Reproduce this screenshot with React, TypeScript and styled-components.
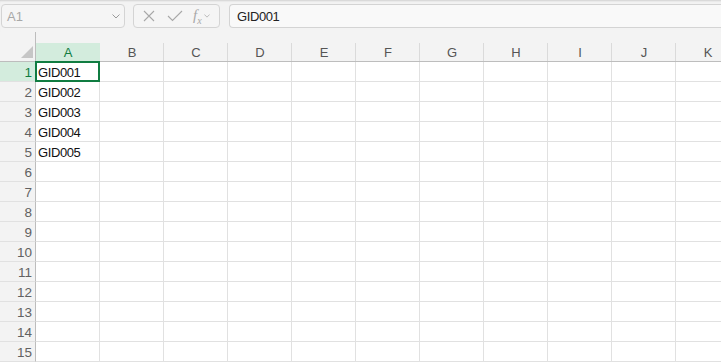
import styled, { createGlobalStyle } from "styled-components";

const GlobalStyle = createGlobalStyle`
  html, body { margin: 0; padding: 0; background: #fff; }
  body { font-family: "Liberation Sans", Arial, sans-serif; overflow: hidden; }
`;

const COLS = ["A", "B", "C", "D", "E", "F", "G", "H", "I", "J", "K"];
const ROWS = Array.from({ length: 15 }, (_, i) => i + 1);
const DATA: Record<number, string> = { 1: "GID001", 2: "GID002", 3: "GID003", 4: "GID004", 5: "GID005" };

const Page = styled.div`
  width: 721px;
  height: 362px;
  overflow: hidden;
  background: #fff;
`;

const Toolbar = styled.div`
  display: flex;
  align-items: center;
  height: 32px;
  padding: 4px 0 4px 1px;
  box-sizing: border-box;
  background: #f3f3f3;
  box-shadow: inset 0 2px 2px -1px rgba(0, 0, 0, 0.14);
`;

const Box = styled.div<{ $w?: number; $grow?: boolean; $bg?: string }>`
  box-sizing: border-box;
  height: 24px;
  width: ${(p) => (p.$w ? `${p.$w}px` : "auto")};
  flex: ${(p) => (p.$grow ? "1" : "none")};
  border: 1px solid #d4d4d4;
  border-radius: 4px;
  background: ${(p) => p.$bg || "#f5f5f5"};
  display: flex;
  align-items: center;
  font-size: 13px;
`;

const NameBox = styled(Box)`
  justify-content: space-between;
  padding: 0 4px 0 5px;
  margin-right: 8px;
  color: #a8a8a8;
`;

const FnBox = styled(Box)`
  padding: 0 4px 0 9px;
  gap: 12px;
  margin-right: 9px;
`;

const FormulaBox = styled(Box)`
  padding-left: 7px;
  border-right: none;
  border-radius: 4px 0 0 4px;
  color: #222;
  letter-spacing: -0.4px;
`;

const Fx = styled.span`
  font-family: "Liberation Serif", serif;
  font-style: italic;
  color: #a8a8a8;
  font-size: 15px;
  display: flex;
  align-items: center;
  gap: 2px;
  margin-left: -2px;
  sub { font-size: 10px; }
`;

const Grid = styled.div`
  display: grid;
  grid-template-columns: 36px repeat(11, 64px);
  grid-template-rows: 30px repeat(15, 20px);
  font-size: 13px;
`;

const Corner = styled.div`
  box-sizing: border-box;
  background: #f3f3f3;
  border-right: 1px solid #bdbdbd;
  border-bottom: 1px solid #bdbdbd;
  position: relative;
  &::after {
    content: "";
    position: absolute;
    right: 2px;
    bottom: 3px;
    width: 0;
    height: 0;
    border-left: 12px solid transparent;
    border-bottom: 12px solid #c6c6c6;
  }
`;

const RowGroup = styled.div`
  display: contents;
`;

const ColHead = styled.div<{ $active?: boolean }>`
  box-sizing: border-box;
  background: #f3f3f3;
  border-bottom: 1px solid #bdbdbd;
  display: flex;
  align-items: flex-end;
  span {
    flex: 1;
    height: 18px;
    box-sizing: border-box;
    display: flex;
    align-items: center;
    justify-content: center;
    padding: 1px 0 0 1px;
    border-right: 1px solid ${(p) => (p.$active ? "#d3ecdd" : "#dadada")};
    background: ${(p) => (p.$active ? "#d3ecdd" : "transparent")};
    color: ${(p) => (p.$active ? "#107c41" : "#555")};
    font-size: 13px;
  }
`;

const RowHead = styled.div<{ $active?: boolean }>`
  box-sizing: border-box;
  border-right: 1px solid #bdbdbd;
  border-bottom: 1px solid #e1e1e1;
  background: ${(p) => (p.$active ? "#d3ecdd" : "#f3f3f3")};
  color: ${(p) => (p.$active ? "#107c41" : "#616161")};
  display: flex;
  align-items: center;
  justify-content: flex-end;
  padding: 1px 3px 0 0;
  font-size: 13.5px;
`;

const Cell = styled.div<{ $selected?: boolean }>`
  box-sizing: border-box;
  border-right: 1px solid #e1e1e1;
  border-bottom: 1px solid #e1e1e1;
  display: flex;
  align-items: center;
  padding: 1px 0 0 2px;
  color: #111;
  letter-spacing: -0.4px;
  position: relative;
  ${(p) =>
    p.$selected &&
    `&::after {
      content: "";
      position: absolute;
      left: -1px;
      top: -1px;
      right: -1px;
      bottom: -1px;
      border: 2px solid #107c41;
    }`}
`;

const Chevron = ({ color = "#9a9a9a", size = 8 }: { color?: string; size?: number }) => (
  <svg width={size} height={size / 2 + 1} viewBox="0 0 8 5">
    <path d="M0.5 0.5 L4 4 L7.5 0.5" fill="none" stroke={color} strokeWidth="1" />
  </svg>
);

export default function App() {
  return (
    <Page>
      <GlobalStyle />
      <Toolbar>
        <NameBox $w={124}>
          <span>A1</span>
          <Chevron />
        </NameBox>
        <FnBox $w={87}>
          <svg width="12" height="12" viewBox="0 0 12 12">
            <path d="M1 1 L11 11 M11 1 L1 11" stroke="#a8a8a8" strokeWidth="1.1" />
          </svg>
          <svg width="16" height="12" viewBox="0 0 16 12">
            <path d="M1 6 L5.5 10.5 L15 1" fill="none" stroke="#a8a8a8" strokeWidth="1.1" />
          </svg>
          <Fx>
            <span>
              f<sub>x</sub>
            </span>
            <Chevron size={6} color="#a8a8a8" />
          </Fx>
        </FnBox>
        <FormulaBox $grow $bg="#f9f9f9">GID001</FormulaBox>
      </Toolbar>
      <Grid>
        <RowGroup>
          <Corner />
          {COLS.map((c) => (
            <ColHead key={c} $active={c === "A"}>
              <span>{c}</span>
            </ColHead>
          ))}
        </RowGroup>
        {ROWS.map((r) => (
          <RowGroup key={r}>
            <RowHead $active={r === 1}>{r}</RowHead>
            {COLS.map((c) => (
              <Cell key={c} $selected={r === 1 && c === "A"}>
                {c === "A" ? DATA[r] : null}
              </Cell>
            ))}
          </RowGroup>
        ))}
      </Grid>
    </Page>
  );
}
